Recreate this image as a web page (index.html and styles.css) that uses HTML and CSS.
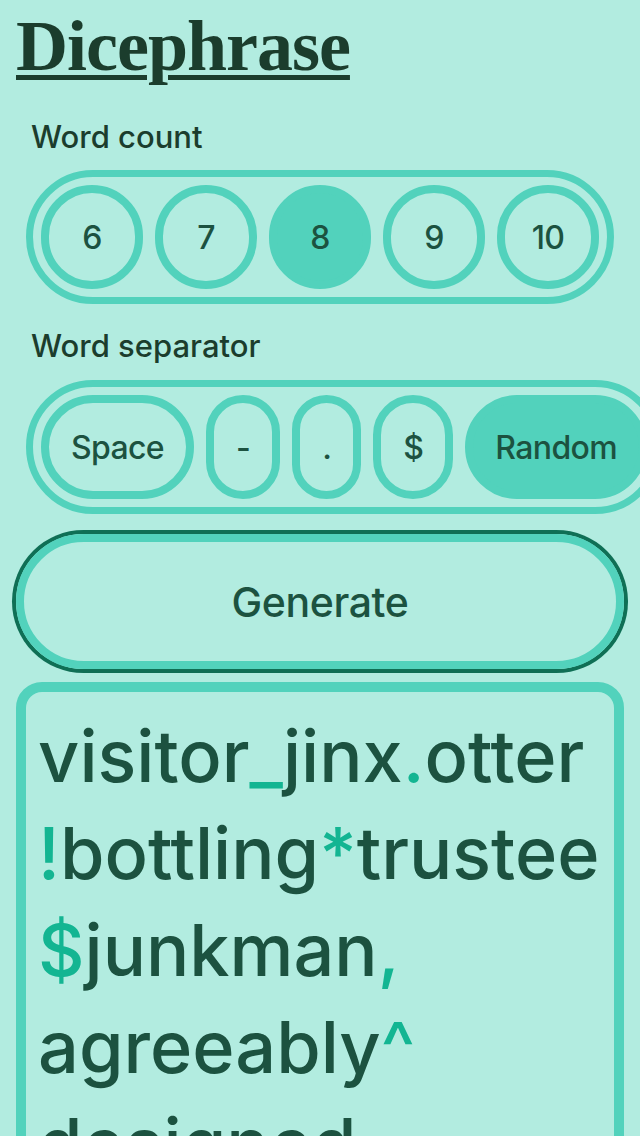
FILE: index.html
```html
<!DOCTYPE html>
<html lang="en">
<head>
<meta charset="utf-8">
<title>Dicephrase</title>
<link rel="stylesheet" href="styles.css">
</head>
<body>
<main class="app">
  <h1 class="title">Dicephrase</h1>

  <div class="label">Word count</div>
  <div class="group">
    <button class="opt num">6</button>
    <button class="opt num">7</button>
    <button class="opt num selected">8</button>
    <button class="opt num">9</button>
    <button class="opt num">10</button>
  </div>

  <div class="label label-sep">Word separator</div>
  <div class="group">
    <button class="opt">Space</button>
    <button class="opt">-</button>
    <button class="opt">.</button>
    <button class="opt">$</button>
    <button class="opt selected">Random</button>
  </div>

  <button class="generate">Generate</button>

  <div class="output"><span>visitor</span><wbr><span class="sep">_</span><wbr><span>jinx</span><wbr><span class="sep">.</span><wbr><span>otter</span><wbr><span class="sep">!</span><wbr><span>bottling</span><wbr><span class="sep">*</span><wbr><span>trustee</span><wbr><span class="sep">$</span><wbr><span>junkman</span><wbr><span class="sep">,</span><wbr><span>agreeably</span><wbr><span class="sep">^</span><wbr><span>designed</span><wbr><span class="sep">~</span><wbr><span>ramble</span></div>
</main>
</body>
</html>
```

FILE: styles.css
```css
html {
  overflow: hidden;
}

body {
  margin: 0;
  background: #b2ece0;
  font-family: Inter, "Noto Sans", sans-serif;
  color: #1c5240;
}

.app {
  padding: 10px 16px 0;
}

.title {
  margin: 0;
  font-family: "Liberation Serif", serif;
  font-weight: 700;
  font-size: 72px;
  line-height: 72px;
  letter-spacing: -1px;
  color: #1b3d2d;
  text-decoration: underline;
  text-decoration-thickness: 5px;
  text-underline-offset: 5px;
}

.label {
  margin: 37px 0 15px 15px;
  font-size: 31px;
  font-weight: 500;
  line-height: 36px;
  color: #1b3d2d;
}

.label-sep {
  margin-top: 24px;
  margin-bottom: 16px;
}

.group {
  display: flex;
  gap: 12px;
  width: max-content;
  margin-left: 10px;
  padding: 8px;
  border: 7px solid #52d2bc;
  border-radius: 999px;
}

.opt {
  flex-shrink: 0;
  height: 104px;
  padding: 0 22px;
  border: 8px solid #52d2bc;
  border-radius: 999px;
  background: transparent;
  font-family: Inter, "Noto Sans", sans-serif;
  font-size: 32px;
  font-weight: 500;
  letter-spacing: -0.02em;
  color: #1c5240;
}

.opt.num {
  width: 102px;
  padding: 0;
}

.opt.selected {
  background: #52d2bc;
}

.generate {
  display: block;
  width: 100%;
  height: 135px;
  margin-top: 20px;
  border: 8px solid #52d2bc;
  border-radius: 999px;
  box-shadow: 0 0 0 4px #0f6f55;
  background: transparent;
  font-family: Inter, "Noto Sans", sans-serif;
  font-size: 41px;
  font-weight: 500;
  letter-spacing: -0.01em;
  color: #1c5240;
}

.output {
  margin-top: 13px;
  min-height: 600px;
  padding: 15px 14px 0 12px;
  border: 10px solid #52d2bc;
  border-radius: 26px;
  font-size: 72px;
  font-weight: 500;
  line-height: 97px;
  color: #1c5240;
}

.sep {
  color: #13b592;
}
```
